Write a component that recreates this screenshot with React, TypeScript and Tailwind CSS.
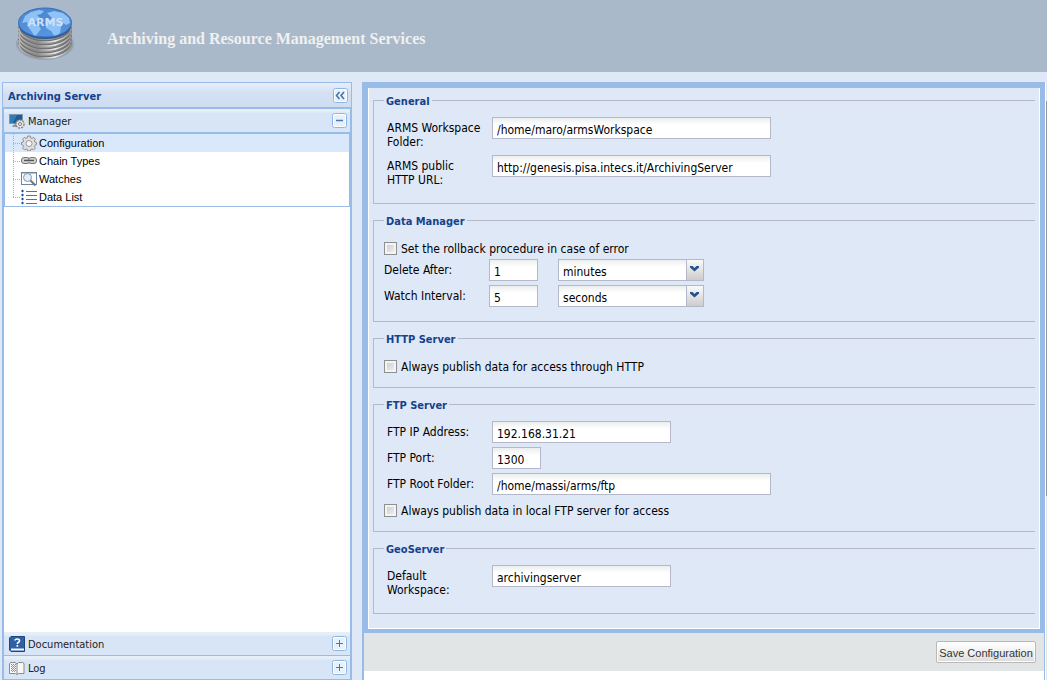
import { useState } from "react";
import type { ReactNode } from "react";

function Logo() {
  return (
    <svg width="64" height="60" viewBox="0 0 64 60" aria-hidden="true">
      <defs>
        <linearGradient id="metal" x1="0" x2="1">
          <stop offset="0" stopColor="#7c7c7c" />
          <stop offset="0.3" stopColor="#8a8a8a" />
          <stop offset="0.6" stopColor="#9a9a9a" />
          <stop offset="1" stopColor="#6a6a6a" />
        </linearGradient>
        <linearGradient id="rim" x1="0" x2="1">
          <stop offset="0" stopColor="#b9b9b9" />
          <stop offset="0.35" stopColor="#8e8e8e" />
          <stop offset="0.7" stopColor="#f0f0f0" />
          <stop offset="1" stopColor="#8f8f8f" />
        </linearGradient>
        <linearGradient id="lid" x1="0" y1="0" x2="0" y2="1">
          <stop offset="0" stopColor="#4a86cf" />
          <stop offset="1" stopColor="#5795e0" />
        </linearGradient>
        <clipPath id="disc">
          <ellipse cx="32" cy="18.500" rx="26" ry="14" />
        </clipPath>
      </defs>
      <ellipse cx="32" cy="40" rx="29" ry="16" fill="#8796a6" opacity="0.6" />
      {[40, 36, 32, 28, 24].map((cy) => (
        <g key={cy}>
          <ellipse cx="32" cy={cy} rx="26.500" ry="14.500" fill="url(#metal)" />
          <path d={`M6 ${cy - 1}a26 14 0 0 0 52 0`} fill="none" stroke="#6b6b6b" strokeWidth="1.500" />
          <path d={`M6 ${cy}a26 14 0 0 0 52 0`} fill="none" stroke="url(#rim)" strokeWidth="1.500" />
        </g>
      ))}
      <ellipse cx="32" cy="20.500" rx="26.500" ry="14.500" fill="#2a5a9b" />
      <ellipse cx="32" cy="18.500" rx="26.500" ry="14.500" fill="url(#lid)" stroke="#3a70b5" />
      <g clipPath="url(#disc)" fill="#8fc2f7">
        <path d="M12 12l6-4 8-2 5 1-3 3-4 1 3 3-4 3-3 3 5 1 3 4-4 5-2 4-3-6-4-5-1-5-5 1z" />
        <path d="M34 9l7-2 9 2 6 5 1 5-4 2-3-2-2 4-1 6-5 4-4-6-5-3v-5l3-3 4-1-3-3z" />
      </g>
      <text x="32.500" y="21.500" textAnchor="middle" fontFamily="DejaVu Sans, sans-serif" fontWeight="bold" fontSize="11" fill="#cfe1f6">
        ARMS
      </text>
    </svg>
  );
}

function ManagerIcon() {
  return (
    <svg width="16" height="16" viewBox="0 0 16 16" aria-hidden="true">
      <rect x="0.500" y="1.500" width="13" height="9" fill="#1f5c93" stroke="#7f97ad" />
      <path d="M1 2h7l-4 8H1z" fill="#2f7cb8" />
      <path d="M3 13l3-2h3v3H4z" fill="#8b98a5" />
      <circle cx="11" cy="11" r="4" fill="#e9e9e9" stroke="#858585" strokeDasharray="2 1" strokeWidth="1.500" />
      <circle cx="11" cy="11" r="1.500" fill="#ffffff" stroke="#777777" />
    </svg>
  );
}

function HelpBookIcon() {
  return (
    <svg width="16" height="16" viewBox="0 0 16 16" aria-hidden="true">
      <path d="M2 0.500h13.500v15H2L0.500 14V2z" fill="#2f61a4" stroke="#1d4580" />
      <path d="M2 12.500h13v2H2z" fill="#f4f7fb" />
      <path d="M6 4.500C6 2.500 10.500 2.500 10.500 4.700C10.500 6.300 8.300 6.200 8.300 8" fill="none" stroke="#ffffff" strokeWidth="1.600" />
      <rect x="7.500" y="9" width="1.700" height="1.700" fill="#ffffff" />
    </svg>
  );
}

function LogBookIcon() {
  return (
    <svg width="16" height="16" viewBox="0 0 16 16" aria-hidden="true">
      <path d="M0.500 3.500L2 2.500h4l2 1.500L9.500 2.500h4l1.500 1V13.500H9.500L8 14.500 6.500 13.500H0.500z" fill="#f7f7f7" stroke="#8a8a8a" />
      <path d="M8 3.500v11" stroke="#8a8a8a" />
      <path d="M2 4.500h5M2 6.500h5M2 8.500h5M2 10.500h5" stroke="#8a8a8a" strokeDasharray="1 1" />
      <path d="M3 5.500h4M3 7.500h4M3 9.500h4M3 11.500h4" stroke="#9a9a9a" strokeDasharray="1 1" />
    </svg>
  );
}

function GearIcon() {
  return (
    <svg width="16" height="16" viewBox="0 0 16 16" aria-hidden="true">
      <path
        d="M6.700 1h2.600l.4 1.800 1.300.6 1.600-1 1.800 1.800-1 1.600.5 1.300 1.600.4v2.200l-1.600.5-.5 1.300 1 1.600-1.800 1.800-1.600-1-1.300.6-.4 1.500H6.700l-.4-1.500-1.300-.6-1.600 1-1.800-1.800 1-1.600-.6-1.300L.5 9.700V7.500L2 7.100l.6-1.300-1-1.600 1.800-1.800 1.600 1 1.300-.6z"
        fill="#dedede"
        stroke="#8d8d8d"
      />
      <circle cx="8" cy="8.500" r="3" fill="#f4f8fd" stroke="#999999" />
    </svg>
  );
}

function ChainIcon() {
  return (
    <svg width="16" height="16" viewBox="0 0 16 16" aria-hidden="true">
      <rect x="0.500" y="4.500" width="8" height="6" rx="2.500" fill="#d0d0d0" stroke="#777777" />
      <rect x="7.500" y="4.500" width="8" height="6" rx="2.500" fill="#d0d0d0" stroke="#777777" />
      <path d="M3 7.500h10" stroke="#555555" strokeWidth="1.500" />
      <path d="M3 8.500h10" stroke="#bdbdbd" />
    </svg>
  );
}

function SearchWindowIcon() {
  return (
    <svg width="16" height="16" viewBox="0 0 16 16" aria-hidden="true">
      <rect x="0.500" y="1.500" width="15" height="12" fill="#ffffff" stroke="#71869b" />
      <path d="M1 2.500h14" stroke="#b6c6d6" />
      <path d="M9 9l5.500 5.500" stroke="#6d7883" strokeWidth="2" />
      <circle cx="6.500" cy="6.500" r="4" fill="#e2eef9" stroke="#8497aa" />
    </svg>
  );
}

function ListIcon() {
  return (
    <svg width="16" height="16" viewBox="0 0 16 16" aria-hidden="true">
      {[2, 6, 10, 14].map((y) => (
        <g key={y}>
          <path d={`M1.500 ${y - 1.500}l1.500 1.500-1.500 1.500L0 ${y}z`} fill="#1c4f9c" />
          <path d={`M5 ${y + 0.500}h11`} stroke="#66717d" />
        </g>
      ))}
    </svg>
  );
}

function ToolButton({ kind, label, onClick }: { kind: "collapse" | "minus" | "plus"; label: string; onClick?: () => void }) {
  return (
    <button type="button" aria-label={label} onClick={onClick} className="size-[15px] shrink-0 cursor-pointer">
      <svg width="15" height="15" viewBox="0 0 15 15" aria-hidden="true">
        <rect x="0.500" y="0.500" width="14" height="14" rx="2" fill="#ffffff" stroke="#8fb5e5" />
        <rect x="2" y="2" width="11" height="11" fill="#e6f1fc" />
        {kind === "collapse" && (
          <path d="M6.500 4L3.500 7.500l3 3.500M11 4L8 7.500l3 3.500" fill="none" stroke="#3f6fa5" strokeWidth="1.500" />
        )}
        {kind !== "collapse" && <path d="M4 7.500h7" stroke="#4a7aa8" strokeWidth={kind === "minus" ? 1.5 : 1} />}
        {kind === "plus" && <path d="M7.500 4v7" stroke="#4a7aa8" />}
      </svg>
    </button>
  );
}

function AccordionHeader({ icon, title, open, onToggle }: { icon: ReactNode; title: string; open: boolean; onToggle?: () => void }) {
  return (
    <div className="flex h-6 shrink-0 items-center border-b border-[#99bbe8] bg-linear-to-b from-[#e6eff8] from-10% to-[#d8e5f6] to-20% pr-[3px] pl-[5px] text-[#222222]">
      {icon}
      <h2 className="flex-1 pt-0.5 pl-[3px]">{title}</h2>
      <ToolButton kind={open ? "minus" : "plus"} label={`Toggle ${title}`} onClick={onToggle} />
    </div>
  );
}

const treeItems = [
  { label: "Configuration", icon: <GearIcon /> },
  { label: "Chain Types", icon: <ChainIcon /> },
  { label: "Watches", icon: <SearchWindowIcon /> },
  { label: "Data List", icon: <ListIcon /> },
];

function Tree() {
  const [selected, setSelected] = useState("Configuration");
  return (
    <ul className="border border-[#99bbe8] font-['Liberation_Sans',Arial,sans-serif] text-black">
      {treeItems.map((item, i) => (
        <li key={item.label} className={item.label === selected ? "bg-[#d9e8fb]" : "bg-white"}>
          <a
            href={`#${item.label.replace(" ", "-").toLowerCase()}`}
            onClick={() => setSelected(item.label)}
            className="flex h-[18px] items-center"
          >
            <svg width="16" height="18" viewBox="0 0 16 18" aria-hidden="true">
              <path d={i === treeItems.length - 1 ? "M8.500 0v10" : "M8.500 0v18"} stroke="#b0b0b0" strokeDasharray="1 1" />
              <path d="M8 9.500h8" stroke="#b0b0b0" strokeDasharray="1 1" />
            </svg>
            {item.icon}
            <span className="pl-0.5">{item.label}</span>
          </a>
        </li>
      ))}
    </ul>
  );
}

function Sidebar() {
  const [open, setOpen] = useState(true);
  return (
    <nav className="flex w-[350px] shrink-0 flex-col border-x border-t border-[#99bbe8] text-[11px] leading-4">
      <div className="flex h-[25px] items-center border-b border-[#99bbe8] bg-linear-to-b from-[#e6eef9] via-[#d3e0f3] via-45% to-[#cfdef2] pr-[3px] pl-[5px]">
        <h1 className="flex-1 pt-[3px] font-bold text-[#15428b]">Archiving Server</h1>
        <ToolButton kind="collapse" label="Collapse sidebar" />
      </div>
      <div className="flex flex-1 flex-col border-x border-t border-[#99bbe8] bg-white">
        <AccordionHeader icon={<ManagerIcon />} title="Manager" open={open} onToggle={() => setOpen(!open)} />
        <div className="flex-1">{open && <Tree />}</div>
        <AccordionHeader icon={<HelpBookIcon />} title="Documentation" open={false} />
        <AccordionHeader icon={<LogBookIcon />} title="Log" open={false} />
      </div>
    </nav>
  );
}

const inputStyle =
  "h-[22px] border border-[#b5b8c8] bg-white bg-linear-to-b from-[#eceeee] to-white to-35% pt-[3px] pl-1 text-black outline-none focus:border-[#7eadd9]";

function Section({ title, children }: { title: string; children: ReactNode }) {
  return (
    <fieldset className="mb-[9px] border border-r-0 border-[#b5b8c8] pb-[10px] pl-[10px]">
      <legend className="px-0.5 pt-0.5 text-[11px] leading-[13px] font-bold text-[#15428b]">{title}</legend>
      <div className="pt-[9px]">{children}</div>
    </fieldset>
  );
}

function Field({ id, label, value, width }: { id: string; label: string; value: string; width: string }) {
  return (
    <div className="mb-1 flex items-start pl-[3px]">
      <label htmlFor={id} className="w-[105px] shrink-0 pt-1 pr-2 pb-0.5">
        {label}
      </label>
      <input id={id} type="text" defaultValue={value} className={`${inputStyle} ${width}`} />
    </div>
  );
}

function CheckField({ id, label }: { id: string; label: string }) {
  return (
    <div className="flex h-[22px] items-center gap-1">
      <input
        id={id}
        type="checkbox"
        className="size-[13px] appearance-none border border-[#8e8f8f] bg-linear-to-br from-[#c4c8ce] to-[#f6f6f6] shadow-[inset_0_0_0_2px_#f4f4f4] checked:from-[#15428b] checked:to-[#15428b]"
      />
      <label htmlFor={id} className="pt-0.5">
        {label}
      </label>
    </div>
  );
}

const units = ["seconds", "minutes", "hours", "days"];

function IntervalField({ id, label, value, unit }: { id: string; label: string; value: string; unit: string }) {
  return (
    <div className="mb-1 flex items-start">
      <label htmlFor={id} className="w-[105px] shrink-0 pt-1">
        {label}
      </label>
      <input id={id} type="text" defaultValue={value} className={`${inputStyle} w-[49px]`} />
      <div className="ml-5 grid w-[146px]">
        <select aria-label={`${label} unit`} defaultValue={unit} className={`${inputStyle} col-start-1 row-start-1 w-full appearance-none`}>
          {units.map((u) => (
            <option key={u}>{u}</option>
          ))}
        </select>
        <span className="pointer-events-none col-start-1 row-start-1 flex w-[18px] items-start justify-center justify-self-end border border-[#b5b8c8] bg-linear-to-b from-[#fafafa] to-[#cccccc] pt-1.5 pr-px">
          <svg width="9" height="6" viewBox="0 0 9 6" aria-hidden="true">
            <path d="M0 0h2.500l2 2 2-2H9v1.500L4.500 5.500 0 1.500z" fill="#24508f" />
          </svg>
        </span>
      </div>
    </div>
  );
}

export default function App() {
  return (
    <div className="flex min-h-screen flex-col bg-[#dfe8f6] font-['DejaVu_Sans_Condensed','DejaVu_Sans',sans-serif]">
      <header className="flex h-[72px] shrink-0 items-center bg-[#a9b9c9] pl-[13px]">
        <div className="self-start pt-1">
          <Logo />
        </div>
        <p className="pt-1.5 pl-[30px] font-['Liberation_Serif',serif] text-base font-bold text-[#f0f0f0]">
          Archiving and Resource Management Services
        </p>
      </header>
      <div className="flex flex-1 gap-[10px] pt-[10px] pl-0.5">
        <Sidebar />
        <div className="flex min-w-0 flex-1">
          <main className="flex flex-1 flex-col border-r border-l-2 border-[#99bbe8] bg-white text-xs leading-[14px] text-black">
            <form className="flex flex-col" onSubmit={(e) => e.preventDefault()}>
              <div className="border-x-4 border-t-[6px] border-b-4 border-[#99bbe8]">
                <div className="border-x border-b border-white bg-[#dfe8f6] px-1 py-[5px]">
                  <Section title="General">
                    <Field id="workspace" label="ARMS Workspace Folder:" value="/home/maro/armsWorkspace" width="w-[279px]" />
                    <Field id="url" label="ARMS public HTTP URL:" value="http://genesis.pisa.intecs.it/ArchivingServer" width="w-[279px]" />
                  </Section>
                  <Section title="Data Manager">
                    <CheckField id="rollback" label="Set the rollback procedure in case of error" />
                    <IntervalField id="delete-after" label="Delete After:" value="1" unit="minutes" />
                    <IntervalField id="watch-interval" label="Watch Interval:" value="5" unit="seconds" />
                  </Section>
                  <Section title="HTTP Server">
                    <CheckField id="http-publish" label="Always publish data for access through HTTP" />
                  </Section>
                  <Section title="FTP Server">
                    <Field id="ftp-ip" label="FTP IP Address:" value="192.168.31.21" width="w-[179px]" />
                    <Field id="ftp-port" label="FTP Port:" value="1300" width="w-[49px]" />
                    <Field id="ftp-root" label="FTP Root Folder:" value="/home/massi/arms/ftp" width="w-[279px]" />
                    <CheckField id="ftp-publish" label="Always publish data in local FTP server for access" />
                  </Section>
                  <Section title="GeoServer">
                    <Field id="geo" label="Default Workspace:" value="archivingserver" width="w-[179px]" />
                  </Section>
                </div>
              </div>
              <div className="flex justify-end bg-[#e1e5e6] py-2 pr-2">
                <button
                  type="submit"
                  className="h-[22px] w-[100px] cursor-pointer rounded-xs border border-[#b8b8b8] bg-linear-to-b from-white via-[#f0f0f0] via-50% to-[#dcdcdc] pt-0.5 font-['Liberation_Sans',Arial,sans-serif] text-[11px] whitespace-nowrap text-[#333333] shadow-[inset_0_0_0_1px_#ffffff]"
                >
                  Save Configuration
                </button>
              </div>
            </form>
          </main>
          <div className="flex w-0.5 flex-col border-l border-white bg-[#e4e4e6] pt-[19px]">
            <div className="h-[395px] bg-[#97979c]" />
          </div>
        </div>
      </div>
    </div>
  );
}
